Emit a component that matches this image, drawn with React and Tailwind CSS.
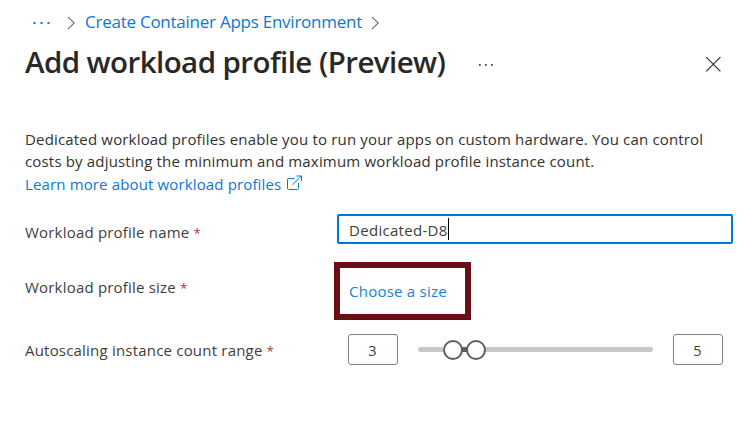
import React from "react";

function Chevron() {
  return (
    <svg className="h-[14px] w-[9px] shrink-0" viewBox="0 0 9 14" fill="none" stroke="#767676" strokeWidth="1.1">
      <path d="M1 1l6.2 6L1 13" />
    </svg>
  );
}

function Dots({ className }) {
  return (
    <svg className={className} viewBox="0 0 18 2" fill="currentColor">
      <rect x="0.5" y="0" width="2" height="2" />
      <rect x="7.5" y="0" width="2" height="2" />
      <rect x="14.5" y="0" width="2" height="2" />
    </svg>
  );
}

function HeaderDots({ className }) {
  return (
    <svg className={className} viewBox="0 0 18 2" fill="currentColor">
      <rect x="2" y="0" width="1.7" height="1.8" />
      <rect x="8" y="0" width="1.7" height="1.8" />
      <rect x="14" y="0" width="1.7" height="1.8" />
    </svg>
  );
}

function Label({ children }) {
  return (
    <div className="w-[309px] shrink-0 whitespace-nowrap text-[15px] leading-[22px] text-[#3f3e3d]">
      <span className="tracking-[0.2px]">{children}</span>
      <span className="ml-[4px] text-[13.5px] leading-none text-[#b0363b]">*</span>
    </div>
  );
}

function CountBox({ value }) {
  return (
    <div className="flex h-[31px] w-[50px] shrink-0 items-center justify-center rounded-[3px] border border-[#807f7e] pr-px pt-[3px] text-[14.5px] text-[#3f3e3d]">
      {value}
    </div>
  );
}

export default function App() {
  return (
    <main className="h-[430px] w-[754px] overflow-hidden bg-white pl-[25px] font-['Open_Sans','Noto_Sans',sans-serif] text-[#323130]">
      <nav className="flex h-[44px] items-center text-[#0b78d4]">
        <Dots className="ml-[8px] mt-[2px] h-[2px] w-[18px]" />
        <span className="ml-[16px] flex w-[18px] pt-px">
          <Chevron />
        </span>
        <a className="w-[278px] whitespace-nowrap text-[17px] leading-[22px] tracking-[-0.25px]">
          Create Container Apps Environment
        </a>
        <span className="ml-[8px] pt-px">
          <Chevron />
        </span>
      </nav>

      <header className="flex h-[40px] items-center">
        <h1 className="w-[452px] shrink-0 whitespace-nowrap pb-[4px] text-[29.5px] font-semibold leading-[36px] tracking-[-0.57px] text-[#292827]">
          Add workload profile (Preview)
        </h1>
        <HeaderDots className="mt-px h-[2px] w-[18px] shrink-0 text-[#484644]" />
        <svg className="ml-[210px] h-[16px] w-[16px] shrink-0" viewBox="0 0 16 16" fill="none" stroke="#323130" strokeWidth="1.2">
          <path d="M1.2 1.2l14.2 14.2M15.4 1.2 1.2 15.4" />
        </svg>
      </header>

      <section className="mt-[44px] whitespace-nowrap text-[15px]">
        <p className="leading-[22px] tracking-[0.17px]">
          Dedicated workload profiles enable you to run your apps on custom hardware. You can control
        </p>
        <p className="leading-[22px] tracking-[0.17px]">
          costs by adjusting the minimum and maximum workload profile instance count.
        </p>
        <a className="flex items-center leading-[24px] text-[#0b78d4]">
          <span className="w-[262px] tracking-[0.14px]">Learn more about workload profiles</span>
          <svg className="mt-[-3px] h-[16px] w-[16px]" viewBox="0 0 16 16" fill="none" stroke="currentColor" strokeWidth="1">
            <path d="M7.5 3.5H1.5a1 1 0 0 0-1 1v9a1 1 0 0 0 1 1h9a1 1 0 0 0 1-1V8M5.5 9.8 14.3 1M9.5 1h5v5" />
          </svg>
        </a>
      </section>

      <section>
        <div className="mt-[18px] flex h-[30px] items-center">
          <div className="pt-[6px]">
            <Label>Workload profile name</Label>
          </div>
          <div className="ml-[3px] flex h-[30px] w-[396px] items-center rounded-[2px] border-2 border-[#0078d4] pl-[10px]">
            <span className="pt-px text-[15px] leading-[22px] tracking-[0.3px] text-[#3f3e3d]">Dedicated-D8</span>
            <span className="h-[22px] w-px bg-black" />
          </div>
        </div>

        <div className="mt-[18px] flex h-[58px] items-center">
          <div className="pb-[8px]">
            <Label>Workload profile size</Label>
          </div>
          <div className="flex h-[58px] w-[137px] items-center border-[6px] border-[#6b0f16] pl-[9px]">
            <a className="whitespace-nowrap text-[15px] leading-[22px] tracking-[0.24px] text-[#1683d8]">Choose a size</a>
          </div>
        </div>

        <div className="mt-[14px] flex h-[31px] items-center">
          <div className="pt-px">
            <Label>Autoscaling instance count range</Label>
          </div>
          <div className="ml-[14px] flex items-center">
            <CountBox value="3" />
            <div className="ml-[20px] flex h-[21px] w-[235px] items-center">
              <div className="h-[5px] w-[25px] rounded-l-full bg-[#c8c8c8]" />
              <div className="z-10 mt-px h-[20px] w-[20px] shrink-0 rounded-full border-2 border-[#605e5c] bg-white" />
              <div className="-mx-px h-[5px] w-[5px] bg-[#605e5c]" />
              <div className="z-10 mt-px h-[20px] w-[20px] shrink-0 rounded-full border-2 border-[#605e5c] bg-white" />
              <div className="-ml-px h-[5px] flex-1 rounded-r-full bg-[#c8c8c8]" />
            </div>
            <div className="ml-[20px]">
              <CountBox value="5" />
            </div>
          </div>
        </div>
      </section>
    </main>
  );
}
